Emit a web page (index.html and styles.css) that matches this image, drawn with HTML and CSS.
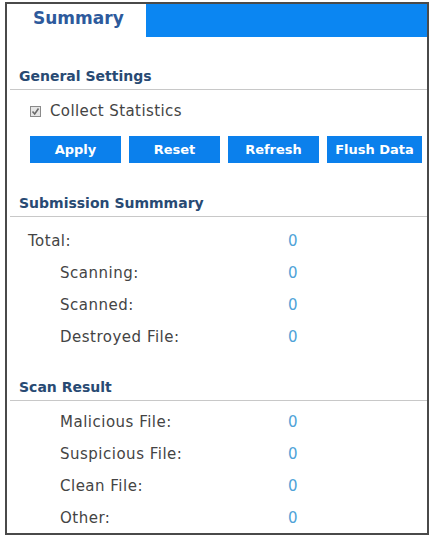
FILE: index.html
```html
<!DOCTYPE html>
<html lang="en">
<head>
    <meta charset="UTF-8">
    <meta name="viewport" content="width=device-width, initial-scale=1.0">
    <title>Sandbox Summary</title>
    <link rel="stylesheet" href="styles.css">
</head>

<body>
    <div class="panel">
        <div class="tabs">
            <div class="tab active">Summary</div>
            <div class="tab-fill"></div>
        </div>

        <div class="sec-title first">General Settings</div>
        <label class="check-row">
            <span class="check">
                <svg width="9" height="9" viewBox="0 0 9 9"><path d="M1.5 4.5 L3.7 7 L7.5 1.5" fill="none" stroke="#6a6a6a" stroke-width="1.6"/></svg>
            </span>
            Collect Statistics
        </label>
        <div class="btn-row">
            <button class="btn">Apply</button>
            <button class="btn">Reset</button>
            <button class="btn">Refresh</button>
            <button class="btn wide">Flush Data</button>
        </div>

        <div class="sec-title">Submission Summmary</div>
        <div class="rows">
            <div class="row"><span class="lbl">Total:</span><span class="val">0</span></div>
            <div class="row sub"><span class="lbl">Scanning:</span><span class="val">0</span></div>
            <div class="row sub"><span class="lbl">Scanned:</span><span class="val">0</span></div>
            <div class="row sub"><span class="lbl">Destroyed File:</span><span class="val">0</span></div>
        </div>

        <div class="sec-title second">Scan Result</div>
        <div class="rows tight">
            <div class="row sub"><span class="lbl">Malicious File:</span><span class="val">0</span></div>
            <div class="row sub"><span class="lbl">Suspicious File:</span><span class="val">0</span></div>
            <div class="row sub"><span class="lbl">Clean File:</span><span class="val">0</span></div>
            <div class="row sub"><span class="lbl">Other:</span><span class="val">0</span></div>
        </div>
    </div>
</body>
</html>
```

FILE: styles.css
```css
*,*::before,*::after{
    box-sizing: border-box;
}

body{
    margin: 0;
    background: #fff;
    font-family: "DejaVu Sans", sans-serif;
}

.panel{
    width: 424px;
    height: 533px;
    margin: 2px 0 0 5px;
    border: 2px solid #4a4a4a;
    overflow: hidden;
}

.tabs{
    display: flex;
    height: 33px;
}

.tab{
    width: 139px;
    padding-left: 26px;
    font-size: 17px;
    font-weight: bold;
    line-height: 28px;
    color: #2d5a9c;
}

.tab-fill{
    flex: 1;
    background: #0b86f2;
}

.sec-title{
    margin: 31px 0 0 3px;
    padding: 0 0 4px 9px;
    border-bottom: 1px solid #c8c8c8;
    font-size: 14px;
    font-weight: bold;
    line-height: 18px;
    color: #284a73;
}

.sec-title.first{
    margin-top: 30px;
}

.sec-title.second{
    margin-top: 25px;
}

.check-row{
    display: flex;
    align-items: center;
    gap: 9px;
    margin: 12px 0 0 23px;
    font-size: 15px;
    letter-spacing: 0.4px;
    line-height: 18px;
    color: #444;
}

.check{
    display: flex;
    justify-content: center;
    align-items: center;
    width: 11px;
    height: 11px;
    border: 1px solid #8a8a8a;
    background: #e6e6e6;
}

.btn-row{
    display: flex;
    gap: 8px;
    margin: 16px 0 0 23px;
}

.btn{
    width: 91px;
    height: 27px;
    padding: 0;
    border: none;
    background: #0b80ec;
    color: #fff;
    font-family: "DejaVu Sans", sans-serif;
    font-size: 13px;
    font-weight: bold;
}

.btn.wide{
    width: 95px;
}

.rows{
    margin-top: 8px;
}

.rows.tight{
    margin-top: 5px;
}

.row{
    display: grid;
    grid-template-columns: 281px 1fr;
    height: 32px;
    align-items: center;
    font-size: 15px;
    letter-spacing: 0.5px;
    color: #444;
}

.row .lbl{
    padding-left: 21px;
}

.row.sub .lbl{
    padding-left: 53px;
}

.val{
    color: #4fa3d8;
}
```
